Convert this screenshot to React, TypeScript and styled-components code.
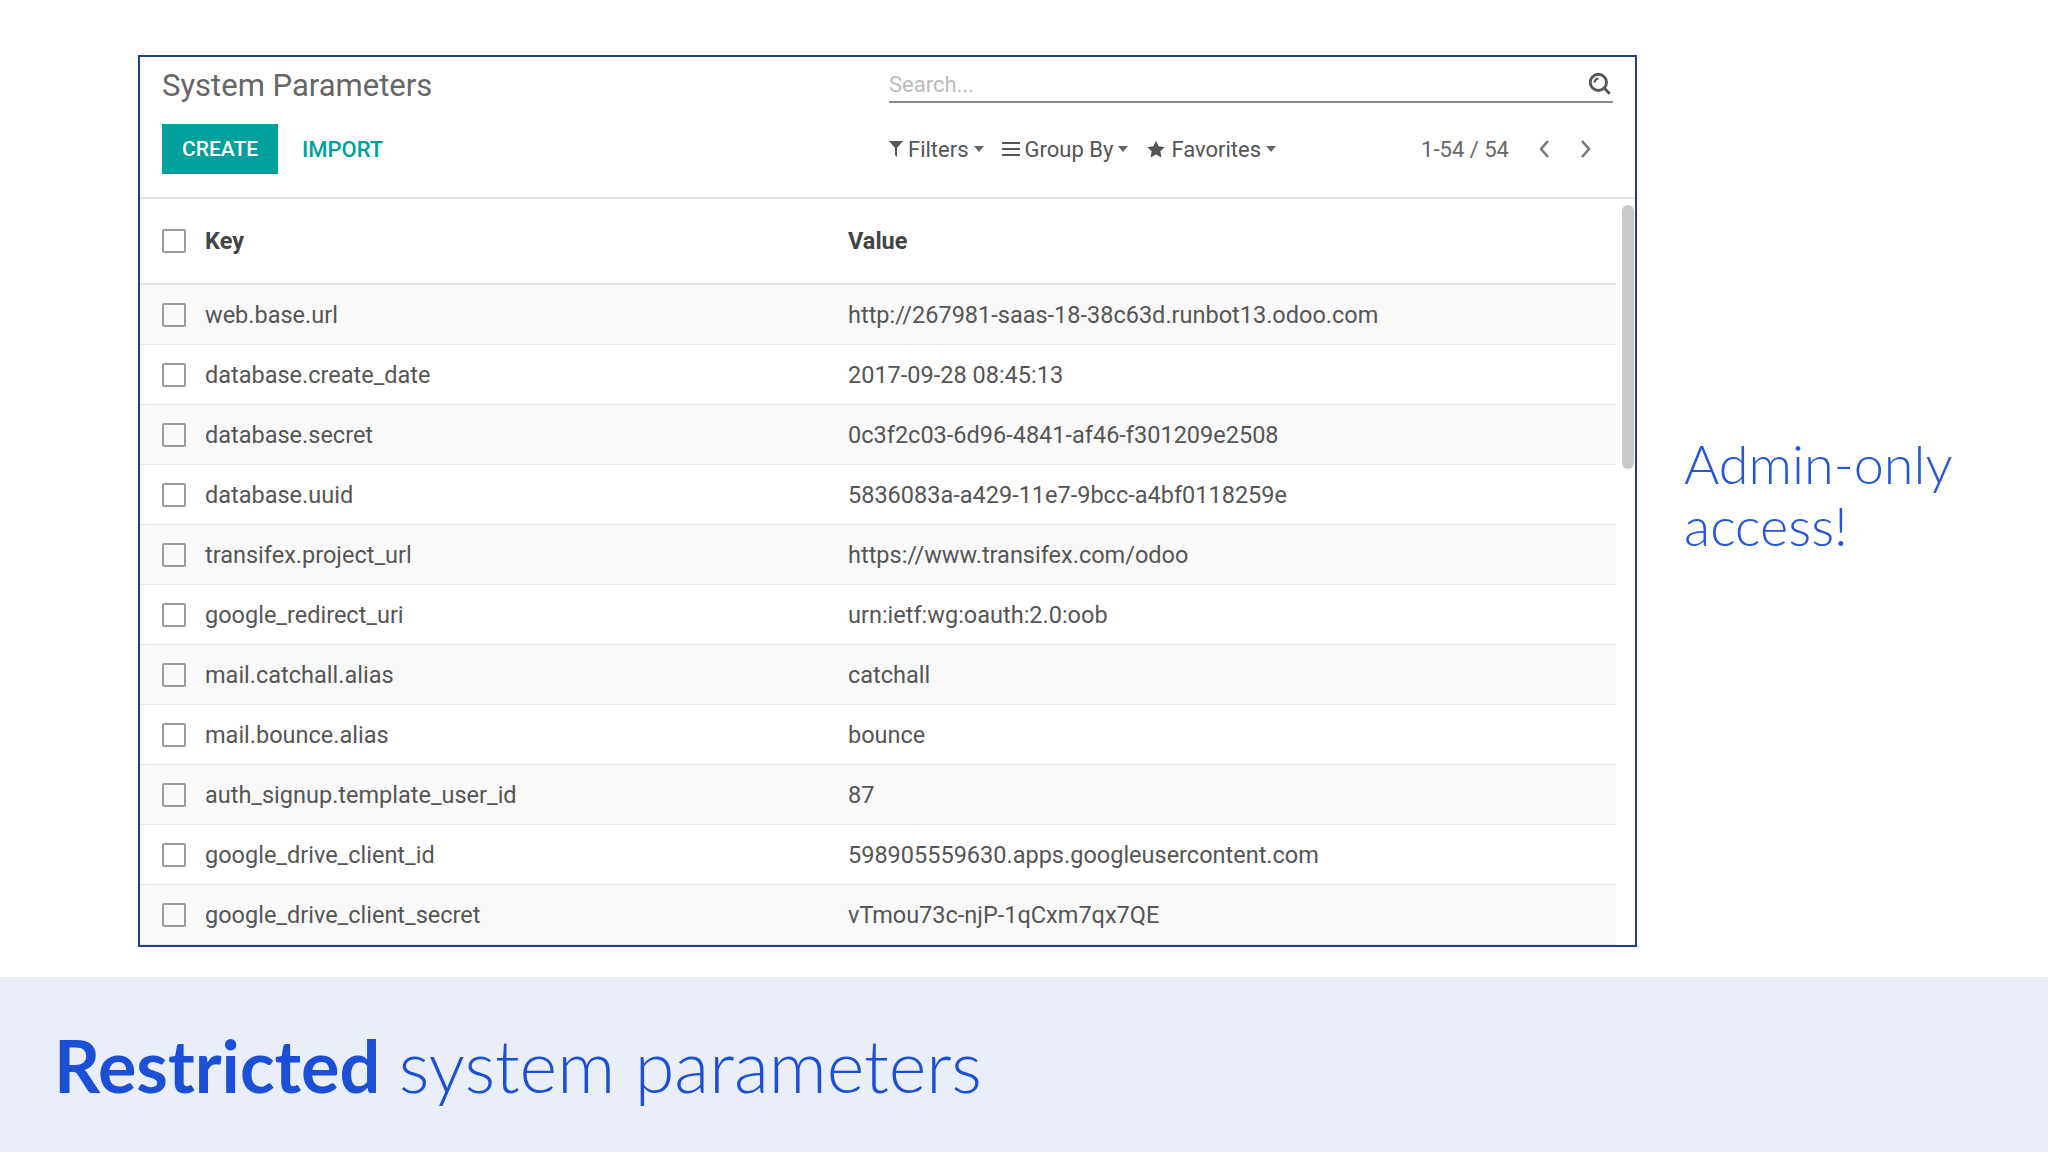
import React from "react";
import styled, { createGlobalStyle } from "styled-components";

const G = createGlobalStyle`
  html,body{margin:0;padding:0;background:#fff;}
  body{width:2048px;height:1152px;overflow:hidden;font-family:Roboto,"Liberation Sans",sans-serif;}
`;
const Page = styled.div`width:2048px;height:1152px;display:flex;flex-direction:column;`;
const Top = styled.div`height:977px;display:flex;align-items:flex-start;padding:55px 0 0 138px;box-sizing:border-box;`;
const Panel = styled.div`width:1499px;height:892px;border:2px solid #1f3f8a;box-sizing:border-box;display:flex;flex-direction:column;background:#fff;overflow:hidden;`;
const Head = styled.div`height:149px;box-sizing:border-box;border-bottom:2px solid #e2e2e2;padding:0 22px 20px 22px;display:grid;grid-template-columns:727px 1fr;grid-template-rows:64px 1fr;`;
const Title = styled.div`font-size:31px;color:#666;align-self:start;margin-top:10px;`;
const Search = styled.div`align-self:start;margin-top:10px;height:34px;border-bottom:2px solid #8a8a8a;display:flex;align-items:center;justify-content:space-between;color:#bbb;font-size:22px;`;
const Btns = styled.div`display:flex;align-items:center;gap:24px;`;
const Create = styled.div`background:#00a09d;color:#fff;width:116px;height:50px;display:flex;align-items:center;justify-content:center;font-size:21px;font-weight:500;`;
const Import = styled.div`color:#00a09d;font-size:22px;font-weight:500;`;
const Tools = styled.div`display:flex;align-items:center;font-size:22px;color:#555;`;
const Tool = styled.span`display:flex;align-items:center;gap:5px;margin-right:18px;`;
const Pager = styled.span`margin-left:auto;display:flex;align-items:center;gap:28px;margin-right:20px;color:#666;font-size:22px;`;
const Body = styled.div`flex:1;display:flex;position:relative;`;
const Table = styled.div`width:1476px;`;
const Row = styled.div<{ $alt?: boolean; $h?: number }>`height:${p => p.$h || 60}px;box-sizing:border-box;display:flex;align-items:center;border-bottom:1px solid #e6e6e6;background:${p => (p.$alt ? "#f9f9f9" : "#fff")};font-size:23.5px;color:#555;padding-left:22px;`;
const Box = styled.span`width:24px;height:24px;border:2px solid #9a9a9a;border-radius:2px;box-sizing:border-box;margin-right:19px;flex:none;`;
const Key = styled.span<{ $b?: boolean }>`width:643px;font-weight:${p => (p.$b ? 700 : 400)};color:${p => (p.$b ? "#444" : "#555")};`;
const Scroll = styled.div`position:absolute;left:1482px;top:6px;width:12px;height:264px;background:#c9c9c9;border-radius:6px;`;
const Note = styled.div`margin:378px 0 0 47px;font-family:Lato,sans-serif;font-weight:300;font-size:54px;line-height:62px;color:#2457d6;`;
const Band = styled.div`flex:1;background:#e9eef9;display:flex;align-items:center;padding-left:54px;font-family:Lato,"Open Sans",sans-serif;font-size:72px;color:#1a4fd6;`;
const Light = styled.span`font-weight:300;`;

const rows = [
  ["web.base.url", "http://267981-saas-18-38c63d.runbot13.odoo.com"],
  ["database.create_date", "2017-09-28 08:45:13"],
  ["database.secret", "0c3f2c03-6d96-4841-af46-f301209e2508"],
  ["database.uuid", "5836083a-a429-11e7-9bcc-a4bf0118259e"],
  ["transifex.project_url", "https://www.transifex.com/odoo"],
  ["google_redirect_uri", "urn:ietf:wg:oauth:2.0:oob"],
  ["mail.catchall.alias", "catchall"],
  ["mail.bounce.alias", "bounce"],
  ["auth_signup.template_user_id", "87"],
  ["google_drive_client_id", "598905559630.apps.googleusercontent.com"],
  ["google_drive_client_secret", "vTmou73c-njP-1qCxm7qx7QE"],
];
const Caret = () => <svg width="10" height="6" viewBox="0 0 10 6"><path d="M0 0h10L5 6z" fill="#666"/></svg>;

export default function App() {
  return (
    <Page>
      <G />
      <Top>
        <Panel>
          <Head>
            <Title>System Parameters</Title>
            <Search>
              <span>Search...</span>
              <svg width="26" height="26" viewBox="0 0 24 24" fill="none" stroke="#555" strokeWidth="2.6"><circle cx="10.5" cy="10.5" r="7.5"/><path d="M16 16l5 5"/><path d="M7 10.5a3.5 3.5 0 0 1 3.5-3.5" strokeWidth="2"/></svg>
            </Search>
            <Btns><Create>CREATE</Create><Import>IMPORT</Import></Btns>
            <Tools>
              <Tool><svg width="14" height="16" viewBox="0 0 14 16"><path d="M0 0h14L8 7v9l-2-2V7z" fill="#555"/></svg>Filters <Caret/></Tool>
              <Tool><svg width="18" height="14" viewBox="0 0 18 14"><path d="M0 1h18M0 7h18M0 13h18" stroke="#555" strokeWidth="2"/></svg>Group By <Caret/></Tool>
              <Tool><svg width="20" height="19" viewBox="0 0 24 24"><path d="M12 1l3.4 7 7.6 1-5.5 5.3 1.3 7.7L12 18.3 5.2 22l1.3-7.7L1 9l7.6-1z" fill="#555"/></svg>Favorites <Caret/></Tool>
              <Pager>1-54 / 54
                <svg width="14" height="22" viewBox="0 0 14 22"><path d="M11 3L4 11l7 8" stroke="#777" strokeWidth="2.5" fill="none"/></svg>
                <svg width="14" height="22" viewBox="0 0 14 22"><path d="M3 3l7 8-7 8" stroke="#777" strokeWidth="2.5" fill="none"/></svg>
              </Pager>
            </Tools>
          </Head>
          <Body>
            <Table>
              <Row $h={86} style={{ borderBottom: "2px solid #e2e2e2" }}><Box /><Key $b>Key</Key><b style={{ color: "#444" }}>Value</b></Row>
              {rows.map((r, i) => (
                <Row key={r[0]} $alt={i % 2 === 0}><Box /><Key>{r[0]}</Key><span>{r[1]}</span></Row>
              ))}
            </Table>
            <Scroll />
          </Body>
        </Panel>
        <Note>Admin-only<br />access!</Note>
      </Top>
      <Band><b>Restricted</b>&nbsp;<Light>system parameters</Light></Band>
    </Page>
  );
}
